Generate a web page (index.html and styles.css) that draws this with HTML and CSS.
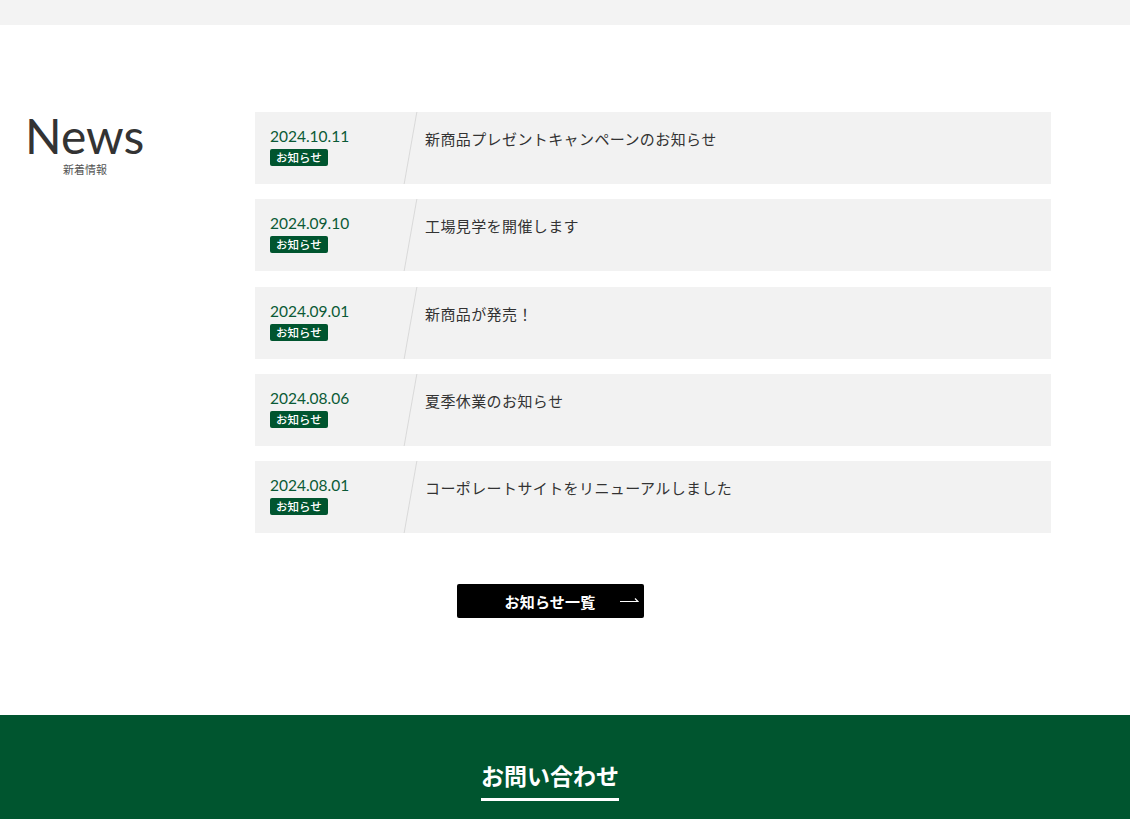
FILE: index.html
```html
<!DOCTYPE html>
<html lang="ja">
<head>
<meta charset="utf-8">
<title>News</title>
<link rel="stylesheet" href="styles.css">
</head>
<body>
<div class="topbar"></div>
<section class="news">
  <div class="news-inner">
    <div class="news-head">
      <h2 class="news-title">News</h2>
      <p class="news-sub">新着情報</p>
    </div>
    <ul class="news-list">
      <li class="news-item">
        <div class="news-meta"><span class="news-date">2024.10.11</span><span class="news-badge">お知らせ</span></div>
        <p class="news-text">新商品プレゼントキャンペーンのお知らせ</p>
      </li>
      <li class="news-item">
        <div class="news-meta"><span class="news-date">2024.09.10</span><span class="news-badge">お知らせ</span></div>
        <p class="news-text">工場見学を開催します</p>
      </li>
      <li class="news-item">
        <div class="news-meta"><span class="news-date">2024.09.01</span><span class="news-badge">お知らせ</span></div>
        <p class="news-text">新商品が発売！</p>
      </li>
      <li class="news-item">
        <div class="news-meta"><span class="news-date">2024.08.06</span><span class="news-badge">お知らせ</span></div>
        <p class="news-text">夏季休業のお知らせ</p>
      </li>
      <li class="news-item">
        <div class="news-meta"><span class="news-date">2024.08.01</span><span class="news-badge">お知らせ</span></div>
        <p class="news-text">コーポレートサイトをリニューアルしました</p>
      </li>
    </ul>
  </div>
  <div class="news-more">
    <a class="more-btn" href="#">お知らせ一覧<svg class="more-arrow" width="19" height="8" viewBox="0 0 19 8"><path d="M0 6.5 H18 L15 3.5" fill="none" stroke="#fff" stroke-width="1.2"/></svg></a>
  </div>
</section>
<section class="contact">
  <h2 class="contact-title">お問い合わせ</h2>
</section>
</body>
</html>
```
FILE: styles.css
```css
* { box-sizing: border-box; }
html, body { margin: 0; padding: 0; }
body {
  font-family: "Lato", "Noto Sans CJK JP", sans-serif;
  color: #333;
  background: #fff;
}
.topbar { height: 25px; background: #f3f3f3; }
.news { padding: 87px 0 97px; }
.news-inner {
  display: flex;
  padding-left: 25px;
}
.news-head { width: 230px; flex: none; }
.news-title {
  margin: 2px 0 0;
  font-family: "Lato", sans-serif;
  font-weight: 400;
  font-size: 48px;
  line-height: 44px;
  color: #333;
  width: 120px;
}
.news-sub {
  margin: 5px 0 0;
  width: 120px;
  text-align: center;
  font-family: "Noto Sans CJK JP", sans-serif;
  font-size: 11px;
  line-height: 12px;
  color: #555;
}
.news-list {
  list-style: none;
  margin: 0;
  padding: 0;
  width: 796px;
  display: flex;
  flex-direction: column;
  gap: 15.25px;
}
.news-item {
  position: relative;
  display: flex;
  height: 72px;
  background: #f2f2f2;
}
.news-meta {
  position: relative;
  width: 170px;
  flex: none;
  padding: 15px 0 0 15px;
  display: flex;
  flex-direction: column;
  align-items: flex-start;
}
.news-meta::after {
  content: "";
  position: absolute;
  top: 0;
  left: 155px;
  width: 1px;
  height: 100%;
  background: #d9d9d9;
  transform: skewX(-10deg);
}
.news-date {
  font-family: "Lato", sans-serif;
  font-size: 15.5px;
  line-height: 18px;
  color: #0b5a36;
}
.news-badge {
  margin-top: 4px;
  background: #00552f;
  color: #fff;
  font-family: "Noto Sans CJK JP", sans-serif;
  font-size: 11.5px;
  line-height: 17px;
  height: 17px;
  padding: 0 6px;
  border-radius: 2px;
  font-weight: 500;
}
.news-text {
  margin: 0;
  padding-top: 17px;
  font-family: "Noto Sans CJK JP", sans-serif;
  font-size: 15px;
  line-height: 20px;
  letter-spacing: 0.4px;
  color: #333;
}
.news-more {
  display: flex;
  justify-content: center;
  padding-top: 51px;
  padding-right: 30px;
}
.more-btn {
  position: relative;
  display: flex;
  align-items: center;
  justify-content: center;
  width: 187px;
  height: 34px;
  background: #000;
  color: #fff;
  border-radius: 2px;
  text-decoration: none;
  font-family: "Noto Sans CJK JP", sans-serif;
  font-weight: 700;
  font-size: 15px;
  letter-spacing: 0.2px;
}
.more-arrow {
  position: absolute;
  right: 5px;
  top: 11px;
}
.contact {
  background: #00552f;
  padding: 44px 30px 60px 0;
  display: flex;
  justify-content: center;
}
.contact-title {
  margin: 0;
  color: #fff;
  font-family: "Noto Sans CJK JP", sans-serif;
  font-weight: 700;
  font-size: 23px;
  line-height: 32px;
  padding-bottom: 7px;
  border-bottom: 3px solid #fff;
}
```
